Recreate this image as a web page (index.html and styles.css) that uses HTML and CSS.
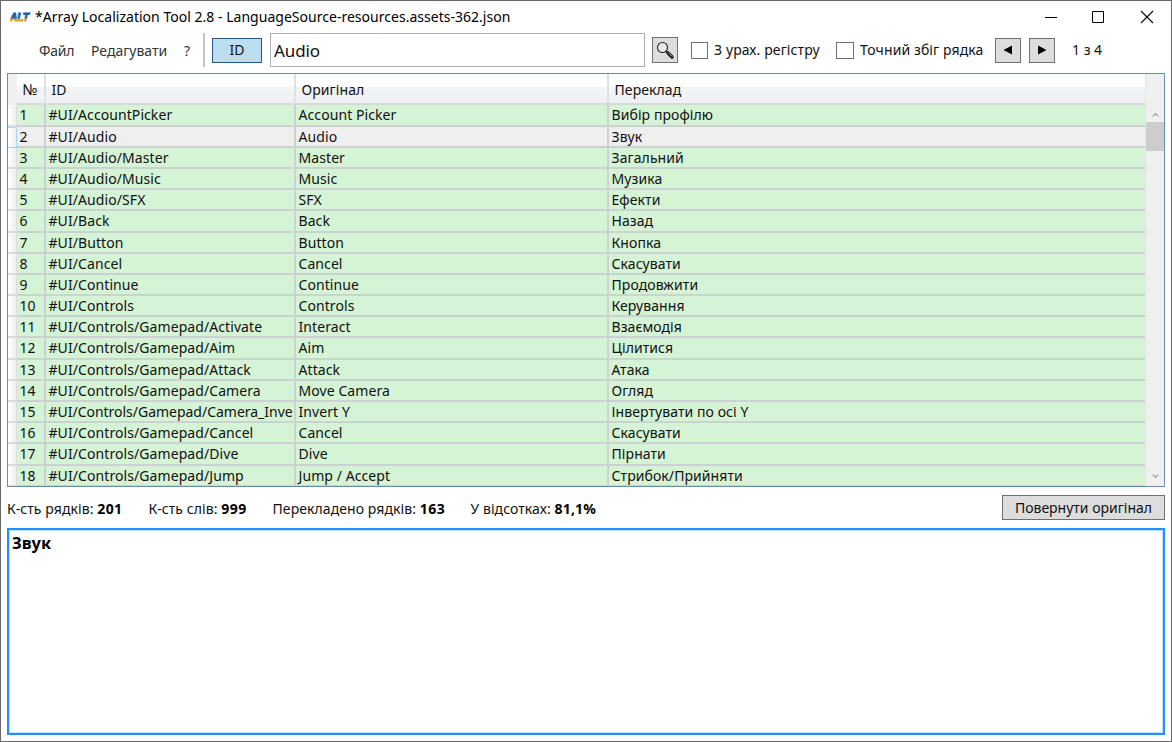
FILE: index.html
```html
<!DOCTYPE html>
<html lang="uk">
<head>
<meta charset="utf-8">
<title>Array Localization Tool</title>
<link rel="stylesheet" href="styles.css">
</head>
<body>
<div class="window">
  <header class="titlebar">
    <svg class="logo" width="21" height="12" viewBox="0 0 21 12">
      <defs><linearGradient id="lg" x1="0" y1="0" x2="0" y2="1"><stop offset="0" stop-color="#1456a8"/><stop offset=".56" stop-color="#2d69a0"/><stop offset=".64" stop-color="#d3ae38"/><stop offset="1" stop-color="#c6a238"/></linearGradient></defs>
      <text x="0" y="10" textLength="19" lengthAdjust="spacingAndGlyphs" fill="url(#lg)" stroke="url(#lg)" stroke-width="1">ALT</text>
    </svg>
    <span class="title">*Array Localization Tool 2.8 - LanguageSource-resources.assets-362.json</span>
    <svg class="controls" width="110" height="14" viewBox="0 0 110 14" fill="none" stroke="#000">
      <path d="M0 7.5h12M47.500 1.500h11v11h-11z"/><path d="M96 1l12 12M108 1L96 13" stroke-width="1.1"/>
    </svg>
  </header>
  <div class="toolbar">
    <nav class="menu"><span class="m1">Файл</span><span class="m2">Редагувати</span><span class="m3">?</span></nav>
    <button class="toggle">ID</button>
    <div class="search">Audio</div>
    <button class="btn find">
      <svg width="20" height="20" viewBox="0 0 20 20"><circle cx="7.500" cy="7.500" r="5" fill="#e8e8e8" stroke="#222" stroke-width="1.100"/><path d="M11 11l2 2" stroke="#222" stroke-width="1.500"/><path d="M13 13l4 4" stroke="#222" stroke-width="3.600" stroke-linecap="round"/><path d="M13.500 12.800l3.700 3.700" stroke="#bbb" stroke-width=".9"/></svg>
    </button>
    <span class="box"></span><span class="check c1">З урах. регістру</span>
    <span class="box b2"></span><span class="check c2">Точний збіг рядка</span>
    <button class="btn prev"><svg width="10" height="10" viewBox="0 0 10 10"><path d="M9 .5v9L.5 5z"/></svg></button>
    <button class="btn next"><svg width="10" height="10" viewBox="0 0 10 10"><path d="M1 .5v9L9.500 5z"/></svg></button>
    <span class="count">1 з 4</span>
  </div>
  <main class="grid">
    <div class="table">
      <div class="row head"><i></i><b class="num">№</b><b>ID</b><b>Оригінал</b><b>Переклад</b></div>
      <div class="rows">
      <div class="row"><i></i><b>1</b><b>#UI/AccountPicker</b><b>Account Picker</b><b>Вибір профілю</b></div>
      <div class="row selected"><i></i><b>2</b><b>#UI/Audio</b><b>Audio</b><b>Звук</b></div>
      <div class="row"><i></i><b>3</b><b>#UI/Audio/Master</b><b>Master</b><b>Загальний</b></div>
      <div class="row"><i></i><b>4</b><b>#UI/Audio/Music</b><b>Music</b><b>Музика</b></div>
      <div class="row"><i></i><b>5</b><b>#UI/Audio/SFX</b><b>SFX</b><b>Ефекти</b></div>
      <div class="row"><i></i><b>6</b><b>#UI/Back</b><b>Back</b><b>Назад</b></div>
      <div class="row"><i></i><b>7</b><b>#UI/Button</b><b>Button</b><b>Кнопка</b></div>
      <div class="row"><i></i><b>8</b><b>#UI/Cancel</b><b>Cancel</b><b>Скасувати</b></div>
      <div class="row"><i></i><b>9</b><b>#UI/Continue</b><b>Continue</b><b>Продовжити</b></div>
      <div class="row"><i></i><b>10</b><b>#UI/Controls</b><b>Controls</b><b>Керування</b></div>
      <div class="row"><i></i><b>11</b><b>#UI/Controls/Gamepad/Activate</b><b>Interact</b><b>Взаємодія</b></div>
      <div class="row"><i></i><b>12</b><b>#UI/Controls/Gamepad/Aim</b><b>Aim</b><b>Цілитися</b></div>
      <div class="row"><i></i><b>13</b><b>#UI/Controls/Gamepad/Attack</b><b>Attack</b><b>Атака</b></div>
      <div class="row"><i></i><b>14</b><b>#UI/Controls/Gamepad/Camera</b><b>Move Camera</b><b>Огляд</b></div>
      <div class="row"><i></i><b>15</b><b class="tight">#UI/Controls/Gamepad/Camera_Inve</b><b>Invert Y</b><b>Інвертувати по осі Y</b></div>
      <div class="row"><i></i><b>16</b><b>#UI/Controls/Gamepad/Cancel</b><b>Cancel</b><b>Скасувати</b></div>
      <div class="row"><i></i><b>17</b><b>#UI/Controls/Gamepad/Dive</b><b>Dive</b><b>Пірнати</b></div>
      <div class="row"><i></i><b>18</b><b>#UI/Controls/Gamepad/Jump</b><b>Jump / Accept</b><b>Стрибок/Прийняти</b></div>
      </div>
    </div>
    <div class="scroll">
      <svg class="up" width="7" height="5" viewBox="0 0 7 5"><path d="M.7 4.300l2.800-2.800 2.800 2.800"/></svg>
      <div class="thumb"></div>
      <svg class="down" width="7" height="5" viewBox="0 0 7 5"><path d="M.7.700l2.800 2.800L6.300.700"/></svg>
    </div>
  </main>
  <div class="status">
    <span class="s1">К-сть рядків: <strong>201</strong></span>
    <span class="s2">К-сть слів: <strong>999</strong></span>
    <span class="s3">Перекладено рядків: <strong>163</strong></span>
    <span class="s4">У відсотках: <strong>81,1%</strong></span>
    <button class="btn revert">Повернути оригінал</button>
  </div>
  <div class="editor">Звук</div>
</div>
</body>
</html>
```
FILE: styles.css
```css
* { box-sizing: border-box; }
body { margin: 0; font: 14px/20px "Noto Sans", "Open Sans", sans-serif; color: #111; }
.window { width: 1172px; height: 742px; border: 1px solid #686868; background: #fff; display: flex; flex-direction: column; padding: 0 6px 6px; overflow: hidden; }
.titlebar { height: 31px; flex: none; display: flex; align-items: center; padding-left: 3px; white-space: nowrap; }
.logo { flex: none; margin-right: 4px; }
.logo text { font: italic bold 10px "Liberation Sans", sans-serif; }
.title { width: 490px; color: #000; letter-spacing: .02px; }
.controls { margin-left: auto; margin-right: 10px; }
.toolbar { height: 41px; flex: none; display: flex; align-items: center; padding-bottom: 5px; white-space: nowrap; }
.menu { width: 198px; height: 34px; flex: none; display: flex; align-items: center; border-right: 2px solid #c4c4c4; padding: 1px 0 0 32px; color: #333; }
.m1 { width: 52px; letter-spacing: -.2px; }
.m2 { width: 93px; }
button { font: inherit; color: #111; padding: 0; display: flex; align-items: center; justify-content: center; border-radius: 0; flex: none; }
.toggle { width: 50px; height: 25px; margin-left: 7px; border: 1px solid #245a86; background: #bcddee; }
.search { width: 375px; height: 34px; flex: none; margin-left: 8px; border: 1px solid #abadb3; padding-left: 3px; font-size: 17px; line-height: 33px; letter-spacing: -.1px; }
.btn { border: 1px solid #707070; background: #ddd; }
.find { width: 26px; height: 26px; margin-left: 7px; }
.box { width: 17px; height: 17px; flex: none; border: 1px solid #707070; margin-left: 13px; }
.check { flex: none; margin-left: 6px; letter-spacing: .1px; }
.c1 { width: 107px; }
.c2 { width: 125px; }
.b2 { width: 18px; margin-left: 15px; }
.prev { width: 26px; height: 25px; margin-left: 10px; }
.next { width: 26px; height: 25px; margin-left: 8px; }
.count { margin-left: 17px; }
.grid { width: 1158px; height: 414px; flex: none; border: 1px solid #688caf; display: flex; overflow: hidden; }
.table { width: 1137px; height: 412px; overflow: hidden; }
.row { display: grid; grid-template-columns: 9px 29px 250px 313px 1fr; height: 21.2px; background: #d5f3d5; }
.row > * { font-weight: 400; font-style: normal; overflow: hidden; white-space: nowrap; border-right: 2px solid #ccd1d1; border-bottom: 2px solid #ccd1d1; padding-left: 2.500px; line-height: 20px; letter-spacing: .08px; }
.row > .tight { letter-spacing: -.02px; }
.row > :last-child { border-right: 0; }
.row > i { background: linear-gradient(90deg, #fff, #eee); border-right-width: 1px; border-color: #ddd; }
.row.selected { background: #efefef; }
.selected > i { border: 1px solid #a3d7f5; border-left: 0; }
.head { height: 31.400px; background: linear-gradient(#fff 0 42%, #f3f4f6 43%, #eff0f3); }
.head > b { line-height: 31px; padding-left: 5.500px; border-right-color: #e0e1e5; border-bottom-color: #d6d8da; }
.head > .num { font-size: 15px; }
.head > i { background: #efefef; border-color: #efefef; }
.scroll { flex: 1; background: #f0f0f0; display: flex; flex-direction: column; align-items: center; border-left: 1px solid #e6e6e6; }
.scroll svg { fill: none; stroke: #999; stroke-width: 1.2; }
.up { margin-top: 38px; }
.thumb { width: 100%; height: 29px; background: #cdcdcd; margin-top: 5px; }
.down { margin-top: auto; margin-bottom: 7px; }
.status { height: 41px; flex: none; display: flex; align-items: center; white-space: nowrap; letter-spacing: .08px; }
.status > span { padding-top: 2px; }
.s1 { width: 141.500px; }
.s2 { width: 124px; }
.s3 { width: 198px; }
.status strong { color: #000; letter-spacing: .45px; }
.s4 strong { letter-spacing: .200px; }
.revert { width: 163px; height: 25px; margin-left: auto; padding-top: 1px; }
.editor { height: 207px; flex: none; border: 2px solid #1e90ff; box-shadow: inset 0 0 0 1px #c6e1fb; padding: 2px 3px; font-weight: 700; font-size: 16.500px; line-height: 22px; color: #000; }
```
